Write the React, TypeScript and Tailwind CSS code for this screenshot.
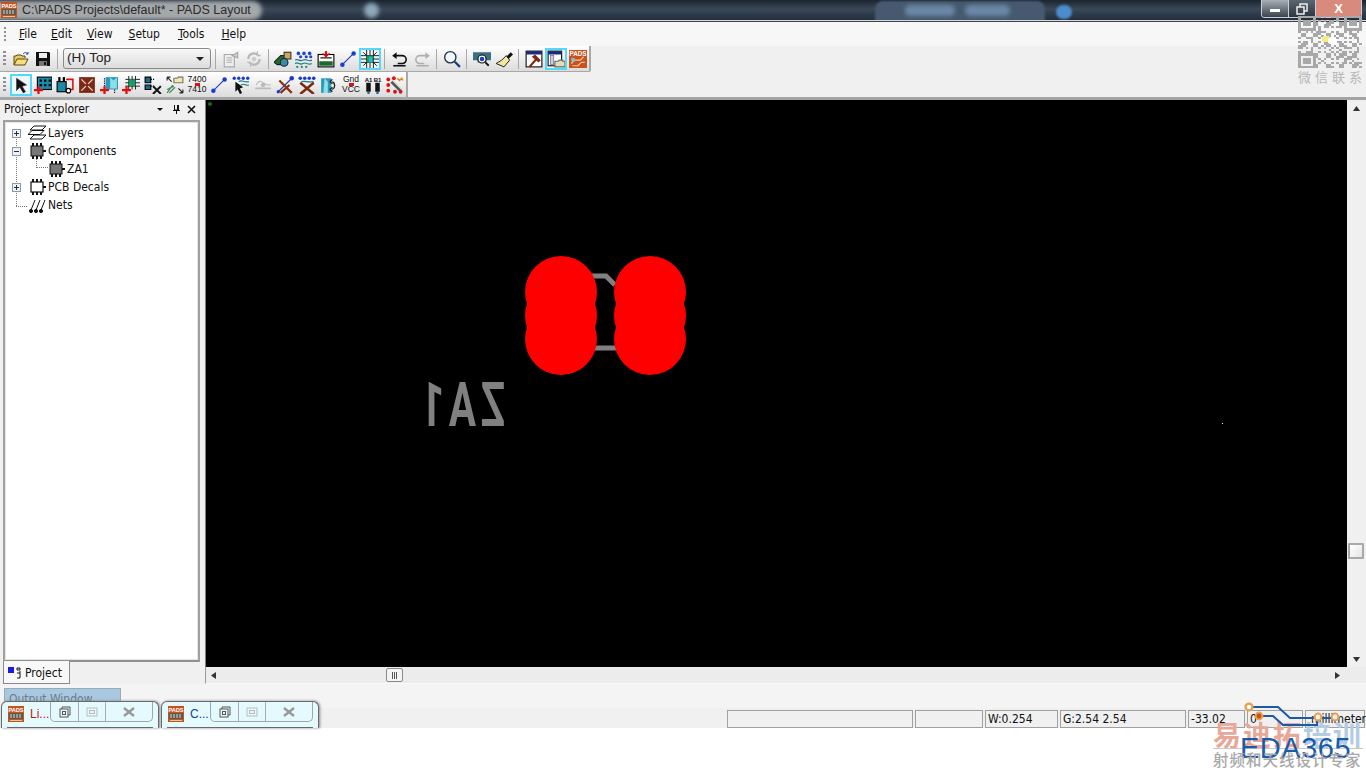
const FONT = "font-['Liberation_Sans',Arial,sans-serif]";
const UI = "font-['DejaVu_Sans_Condensed','Liberation_Sans',sans-serif]";

// small 16x16 toolbar drawings
const icons: Record<string, React.ReactNode> = {
  open: (
    <>
      <path d="M1 14V5h2l1-1h4l1 1h3v2" fill="#e8c860" stroke="#5a4a10" />
      <path d="M1 14l3-6h11l-3 6z" fill="#f6dc80" stroke="#5a4a10" />
      <path d="M10 3c2-2 3-2 5 0M15 3v-2M15 3h-2" fill="none" stroke="#1a4aa0" />
    </>
  ),
  save: (
    <>
      <path d="M1 1h13l1 1v13H1z" fill="#111" />
      <rect x="4" y="2" width="8" height="5" fill="#eee" />
      <rect x="4" y="10" width="8" height="5" fill="#777" />
      <rect x="9" y="11" width="2" height="3" fill="#111" />
    </>
  ),
  docOff: (
    <>
      <path d="M2 4h9v11H2z" fill="#eee" stroke="#aaa" />
      <path d="M4 7h5M4 9h5M4 11h5" stroke="#bbb" />
      <path d="M9 5l5-3v5z" fill="#ccc" stroke="#aaa" />
    </>
  ),
  cycleOff: (
    <>
      <path d="M3 8a5 5 0 0 1 9-3M13 8a5 5 0 0 1-9 3" fill="none" stroke="#b8b8b8" strokeWidth="2" />
      <circle cx="8" cy="8" r="2" fill="#ccc" />
      <path d="M11 1v4h3M5 15v-4H2" fill="none" stroke="#bbb" />
    </>
  ),
  board: (
    <>
      <path d="M0 11l6-6h4v8H3z" fill="#2c6a1c" stroke="#123" />
      <rect x="9" y="2" width="6" height="6" fill="#c8a860" stroke="#432" />
      <circle cx="9" cy="11" r="3.4" fill="#3a8aa0" stroke="#124" />
    </>
  ),
  nets: (
    <>
      <path d="M0 9c3-2 4 2 7 0s4 2 8 0M0 12c3-2 4 2 7 0s4 2 8 0" fill="none" stroke="#1a7a8a" />
      <g fill="#2244cc">
        <circle cx="3" cy="3" r="1.6" /><circle cx="8" cy="3" r="1.6" /><circle cx="13" cy="3" r="1.6" />
        <circle cx="5" cy="6" r="1.4" /><circle cx="10" cy="6" r="1.4" /><circle cx="14" cy="6" r="1.4" />
      </g>
      <g fill="#1a8a7a"><circle cx="2" cy="15" r="1" /><circle cx="6" cy="15" r="1" /><circle cx="10" cy="15" r="1" /></g>
    </>
  ),
  pcbArrow: (
    <>
      <rect x="1" y="4" width="14" height="11" fill="#fff" stroke="#000" />
      <rect x="2" y="10" width="12" height="4" fill="#1d6a2c" />
      <path d="M3 7h10" stroke="#000" />
      <path d="M8 1v5" stroke="#d01010" strokeWidth="2" />
      <path d="M5 3l3 3 3-3" fill="none" stroke="#d01010" />
    </>
  ),
  line: (
    <>
      <path d="M3 13L13 3" stroke="#1a3ab0" />
      <circle cx="3" cy="13" r="2" fill="#1a3ad0" />
      <circle cx="13" cy="3" r="2" fill="#1a3ad0" />
    </>
  ),
  rays: (
    <>
      <path d="M8 0v16M5 0v16M11 0v16M0 8h16M0 5h16M0 11h16M2 2l12 12M14 2L2 14" stroke="#111" strokeWidth="0.8" />
      <rect x="5" y="5" width="6" height="6" fill="#1a9a4a" />
      <rect x="7" y="6" width="3" height="5" fill="#20b8e8" />
    </>
  ),
  undo: (
    <>
      <path d="M3 5h7a3.5 3.5 0 0 1 0 7H6" fill="none" stroke="#111" strokeWidth="1.4" />
      <path d="M5 2L1 5l4 3z" fill="#111" />
      <path d="M2 14h11" stroke="#111" strokeWidth="1.4" />
    </>
  ),
  redo: (
    <>
      <path d="M13 5H6a3.5 3.5 0 0 0 0 7h4" fill="none" stroke="#b0b0b0" strokeWidth="1.4" />
      <path d="M11 2l4 3-4 3z" fill="#b0b0b0" />
      <path d="M3 14h11" stroke="#b0b0b0" strokeWidth="1.4" />
    </>
  ),
  zoom: (
    <>
      <circle cx="6.5" cy="6.5" r="5" fill="#f2f8ff" stroke="#234" strokeWidth="1.2" />
      <path d="M10.5 10.5l4.5 4.5" stroke="#1a3a80" strokeWidth="2" />
    </>
  ),
  view: (
    <>
      <path d="M0 2h16v7h-4v2H4V9H0z" fill="#3a7080" />
      <circle cx="8" cy="8" r="3.6" fill="#fff" stroke="#111" />
      <circle cx="8" cy="8" r="2" fill="#1a3ad0" />
      <path d="M11 11l3 3" stroke="#111" strokeWidth="1.6" />
    </>
  ),
  brush: (
    <>
      <path d="M10 6l4-4 2 2-4 4z" fill="#111" />
      <path d="M10 5l3 4-5 6-7-3 5-3z" fill="#f0e8a0" stroke="#111" strokeWidth="0.8" />
    </>
  ),
  hammer: (
    <>
      <rect x="1" y="1" width="14" height="14" fill="#fff" stroke="#111" />
      <rect x="1" y="1" width="14" height="3" fill="#1a2a80" />
      <path d="M4 15l7-8" stroke="#7a2a10" strokeWidth="2" />
      <path d="M6 6l3-2 5 5-2 2z" fill="#7a2a10" />
    </>
  ),
  winFolder: (
    <>
      <rect x="1" y="1" width="12" height="13" fill="#fff" stroke="#111" />
      <rect x="1" y="1" width="12" height="3" fill="#1a2a80" />
      <rect x="3" y="5" width="3" height="8" fill="#ccd" stroke="#668" strokeWidth="0.6" />
      <path d="M7 15V10h3l1-1h3v1h2v5z" fill="#e0ddb8" stroke="#666" />
    </>
  ),
  logo: (
    <>
      <rect width="16" height="16" fill="#c8521c" />
      <text x="8" y="5.5" textAnchor="middle" fontSize="5.6" fontWeight="700" fill="#fff" fontFamily="Liberation Sans">PADS</text>
      <path d="M2 12l3-3h5l3-3M3 14h5l3-3h3" fill="none" stroke="#f2c8a0" />
      <rect x="2" y="7" width="3" height="3" fill="#7ac0e0" />
    </>
  ),
  appLogo: (
    <>
      <rect width="16" height="16" fill="#c8521c" />
      <text x="8" y="5.5" textAnchor="middle" fontSize="5.6" fontWeight="700" fill="#fff" fontFamily="Liberation Sans">PADS</text>
      <rect x="1" y="7" width="14" height="6" fill="#5a5a50" />
      <path d="M3 8v4M6 8v4M9 8v4M12 8v4" stroke="#ddd" />
      <rect x="2" y="14" width="12" height="1" fill="#f2c8a0" />
    </>
  ),
  cursor: <path d="M4 2l9 6-4 1 3 5-2 1-3-5-3 3z" fill="#111" stroke="#334" strokeWidth="0.5" />,
  gridAdd: (
    <>
      <rect x="3" y="1" width="13" height="11" fill="#1a8aa8" stroke="#000" />
      <path d="M5 3h2v2H5zM9 3h2v2H9zM13 3h2v2h-2zM5 7h2v2H5zM9 7h2v2H9zM13 7h2v2h-2z" fill="#000" />
      <path d="M4 9v7M0 12.5h8" stroke="#e01010" strokeWidth="2" />
    </>
  ),
  connect: (
    <>
      <rect x="1" y="5" width="8" height="9" fill="#1a8aa8" stroke="#000" />
      <rect x="2" y="1" width="2" height="4" fill="#000" /><rect x="6" y="1" width="2" height="4" fill="#000" />
      <path d="M9 3h6v9h-3" fill="none" stroke="#e01010" strokeWidth="1.4" />
      <circle cx="11" cy="13" r="2" fill="#fff" stroke="#000" />
    </>
  ),
  brownBox: (
    <>
      <rect x="1" y="1" width="14" height="14" fill="#7a2a14" />
      <path d="M3 3l4 4M13 3L9 7M3 13l4-4M13 13L9 9" stroke="#f0d0c0" strokeWidth="1.2" />
    </>
  ),
  dropAdd: (
    <>
      <path d="M5 1h11v11H5z" fill="#2a9ab8" />
      <path d="M9 1l3 3 3-3v10H9z" fill="#8adfe8" />
      <path d="M4 2v7M13 12v3" stroke="#113" strokeDasharray="1 1" />
      <path d="M4 9v7M0 12.5h8" stroke="#e01010" strokeWidth="2" />
    </>
  ),
  raysAdd: (
    <>
      <path d="M9 0v12M6 0v12M12 0v12M3 6h13M3 3h13M3 9h13" stroke="#111" strokeWidth="0.8" />
      <rect x="6" y="3" width="6" height="6" fill="#1a9a6a" />
      <path d="M4 9v7M0 12.5h8" stroke="#e01010" strokeWidth="2" />
    </>
  ),
  nodeX: (
    <>
      <path d="M1 1h5v5H1zM1 8h5v4H1z" fill="#1a6a90" stroke="#000" />
      <path d="M6 3h4M6 9h3" stroke="#000" strokeDasharray="1 1" />
      <path d="M8 9l7 7M15 9l-7 7" stroke="#111" strokeWidth="1.8" />
    </>
  ),
  folderArrows: (
    <>
      <path d="M7 6V2h3l1-1h4v5z" fill="#efe6b0" stroke="#776" />
      <path d="M1 1l4 4M1 1h3M1 1v3M15 15l-4-4M15 15h-3M15 15v-3" stroke="#222" fill="none" />
      <path d="M1 15l5-7M1 12l6-3M3 15l5-5" stroke="#3a8a5a" />
    </>
  ),
  cross: (
    <>
      <path d="M2 14L14 2" stroke="#1a3ab0" />
      <circle cx="14" cy="2" r="2" fill="#1a3ad0" />
      <circle cx="2" cy="14" r="1.5" fill="#1a3ad0" />
      <path d="M3 4l11 11M12 8l-8 7" stroke="#8a3010" strokeWidth="2" />
    </>
  ),
  netCursor: (
    <>
      <path d="M6 5c3-2 4 1 9 0M8 8c3-2 4 1 7 0" fill="none" stroke="#1a7a8a" />
      <g fill="#1a3ad0"><circle cx="2" cy="2" r="1.5" /><circle cx="6" cy="2" r="1.5" /><circle cx="10" cy="2" r="1.5" /><circle cx="14" cy="2" r="1.5" /></g>
      <path d="M3 5l7 5-3 1 2 4-2 1-2-4-2 2z" fill="#111" />
    </>
  ),
  routeOff: (
    <>
      <path d="M1 11h14" stroke="#bbb" strokeWidth="1.5" />
      <path d="M2 8c2-4 4-4 6-2l4 2h3" fill="none" stroke="#bbb" />
      <circle cx="8" cy="8" r="2" fill="#bbb" />
    </>
  ),
  netX: (
    <>
      <g fill="#1a3ad0"><circle cx="2" cy="2" r="1.6" /><circle cx="6" cy="2" r="1.6" /><circle cx="10" cy="2" r="1.6" /><circle cx="14" cy="2" r="1.6" /></g>
      <path d="M3 5c4-1 6 1 11 0" stroke="#1a7a8a" fill="none" />
      <path d="M2 6l12 10M14 6L2 16" stroke="#7a2a10" strokeWidth="2.2" />
    </>
  ),
  swap: (
    <>
      <path d="M1 2h9v13H1z" fill="#2a9ab8" />
      <path d="M4 2l3 3v10H3z" fill="#8adfe8" />
      <path d="M11 5a4 4 0 0 1 0 7M11 3l-2 2 2 2M11 10l-2 2 2 2" fill="none" stroke="#222" strokeWidth="1.2" />
    </>
  ),
  pins: (
    <>
      <text x="4" y="5" textAnchor="middle" fontSize="5.4" fontWeight="700" fill="#111" fontFamily="Liberation Sans">A1</text>
      <text x="12" y="5" textAnchor="middle" fontSize="5.4" fontWeight="700" fill="#111" fontFamily="Liberation Sans">B1</text>
      <rect x="2" y="6" width="4" height="8" fill="#111" /><rect x="10" y="6" width="4" height="8" fill="#111" />
      <rect x="3" y="14" width="2" height="2" fill="#1a6a90" /><rect x="11" y="14" width="2" height="2" fill="#1a6a90" />
    </>
  ),
  redDots: (
    <>
      <g fill="#e01010"><circle cx="2" cy="3" r="1.7" /><circle cx="7" cy="2" r="1.7" /><circle cx="2" cy="8" r="1.7" /><circle cx="2" cy="13" r="1.7" /><circle cx="8" cy="14" r="1.7" /><circle cx="13" cy="14" r="1.7" /></g>
      <path d="M5 5l8 8" stroke="#555" strokeWidth="3" />
      <path d="M6 4l8 8" stroke="#ddd" />
      <path d="M10 2l2 2 2-2 1 2" fill="none" stroke="#e08a10" strokeWidth="1.4" />
    </>
  ),
};

const Glyph = ({ name, size = 16 }: { name: string; size?: number }) => (
  <svg width={size} height={size} viewBox="0 0 16 16" className="shrink-0">{icons[name]}</svg>
);

const ToolBtn = ({ name, active, size = 18 }: { name: string; active?: boolean; size?: number }) => (
  <div className={`w-[22px] h-[22px] flex items-center justify-center ${active ? "border-2 border-[#55d8f8] bg-[#eef6fa]" : ""}`}>
    <Glyph name={name} size={size} />
  </div>
);

const TextBtn = ({ top, bottom }: { top: string; bottom: string }) => (
  <div className="w-[22px] h-[22px] flex flex-col items-center justify-center leading-[9px] text-[8.5px] text-[#111] relative">
    <span>{top}</span>
    <span className="mt-px">{bottom}</span>
    <span className="absolute top-[9px] left-[9px] w-[5px] h-[3px] bg-[#e01010]" />
  </div>
);

const Grip = () => (
  <div className="w-[3px] h-[16px] mx-[3px] bg-[repeating-linear-gradient(180deg,#909090_0,#909090_2px,transparent_2px,transparent_4px)]" />
);

const Sep = () => <div className="w-px h-[20px] bg-[#a8a8a8] ml-[3px] mr-[4px]" />;

const Menu = ({ label, cls }: { label: string; cls: string }) => (
  <span className={cls}>
    <span className="underline underline-offset-1">{label[0]}</span>
    {label.slice(1)}
  </span>
);

const TreeRow = ({ icon, label, box, indent }: { icon: React.ReactNode; label: string; box?: "+" | "-"; indent?: boolean }) => (
  <div className="h-[18px] flex items-center relative">
    <div className={`shrink-0 w-[20px] flex items-center ${indent ? "ml-[42px]" : "ml-[23px]"}`}>{icon}</div>
    <span className={`${UI} text-[12px] text-[#111]`}>{label}</span>
    {box && (
      <span className="absolute left-[7px] top-[5px] w-[9px] h-[9px] bg-[#eef2f6] border border-[#8a98a8] flex items-center justify-center text-[9px] leading-none text-[#234]">
        <span className="w-[5px] h-px bg-[#234] absolute" />
        {box === "+" && <span className="h-[5px] w-px bg-[#234] absolute" />}
      </span>
    )}
  </div>
);

const Chip = ({ dark }: { dark?: boolean }) => (
  <svg width="18" height="16" viewBox="0 0 18 16">
    <rect x="3" y="3" width="12" height="10" fill={dark ? "#777" : "#fff"} stroke="#111" strokeWidth={dark ? 1 : 1.2} />
    <path d="M5 0v3M9 0v3M13 0v3M5 13v3M9 13v3M13 13v3M15 8h3" stroke="#111" strokeWidth="2" />
  </svg>
);

const MiniWindow = ({ label, color }: { label: string; color: string }) => (
  <div className="w-[158px] h-[27px] relative rounded-t-[6px] border border-b-0 border-[#6a6a6a] bg-[#e4fafc] shadow-[1px_0_3px_#888] shrink-0">
    <div className="absolute left-[6px] top-[4px]">
      <Glyph name="appLogo" />
    </div>
    <span className={`absolute left-[28px] top-[3px] text-[12px] ${color}`}>{label}</span>
    <div className="absolute left-[48px] top-0 w-[103px] h-[20px] flex border border-t-0 border-[#9aa] rounded-b-[5px] text-[#777]">
      <div className="w-[28px] flex items-center justify-center border-r border-[#aab]">
        <svg width="12" height="12" viewBox="0 0 12 12" fill="none" stroke="#555"><rect x="1" y="3" width="8" height="8" /><path d="M3 3V1h8v8H9" /><rect x="3.5" y="5.5" width="3" height="3" /></svg>
      </div>
      <div className="w-[27px] flex items-center justify-center border-r border-[#aab]">
        <svg width="12" height="10" viewBox="0 0 12 10" fill="none" stroke="#bbb"><rect x="1" y="1" width="10" height="8" /><rect x="3.5" y="3.5" width="5" height="3" /></svg>
      </div>
      <div className="flex-1 flex items-center justify-center">
        <svg width="12" height="10" viewBox="0 0 12 10" stroke="#999" strokeWidth="2.4"><path d="M1 1l10 8M11 1L1 9" /></svg>
      </div>
    </div>
    <div className="absolute left-[5px] right-[5px] bottom-0 h-px bg-[#667]" />
  </div>
);

const Field = ({ w, children }: { w: string; children?: React.ReactNode }) => (
  <div className={`${w} ${UI} h-[18px] border border-[#a0a0a0] bg-[#f0f0f0] text-[12px] leading-[16px] pl-[2px] whitespace-nowrap overflow-visible text-[#111]`}>
    {children}
  </div>
);

// watermark code, pseudo random modules
const qr: number[][] = [];
for (let y = 0; y < 25; y++) {
  for (let x = 0; x < 25; x++) {
    const finder = (x < 7 && y < 7) || (x > 17 && y < 7) || (x < 7 && y > 17);
    if (!finder && ((x * 7 + y * 13 + x * y * 3) % 5 < 2 || (x ^ y) % 7 === 0)) qr.push([x, y]);
  }
}

const QrCode = () => (
  <svg width="64" height="52" viewBox="0 0 25 25" preserveAspectRatio="none" shapeRendering="crispEdges" className="block">
    <g fill="#a8a8a8">
      {qr.map(([x, y]) => (
        <rect key={`${x}-${y}`} x={x} y={y} width="1" height="1" />
      ))}
    </g>
    <g fill="none" stroke="#a8a8a8">
      <rect x="0.5" y="0.5" width="6" height="6" /><rect x="18.5" y="0.5" width="6" height="6" /><rect x="0.5" y="18.5" width="6" height="6" />
    </g>
    <g fill="#a8a8a8">
      <rect x="2" y="2" width="3" height="3" /><rect x="20" y="2" width="3" height="3" /><rect x="2" y="20" width="3" height="3" />
    </g>
    <circle cx="11" cy="11" r="1.6" fill="#f4ec80" />
    <circle cx="13.5" cy="12" r="1.8" fill="#fff" />
  </svg>
);

const Arrow = ({ d }: { d: string }) => (
  <svg width="9" height="9" viewBox="0 0 9 9"><path d={d} fill="#333" /></svg>
);

export default function App() {
  return (
    <div className={`${FONT} relative w-[1366px] h-[768px] overflow-hidden bg-white flex flex-col`}>
      {/* title bar */}
      <div className="h-[22px] shrink-0 relative overflow-hidden bg-[#2b3744]">
        <div className="absolute inset-x-0 top-0 h-[20px] bg-[linear-gradient(180deg,#1b2530_0,#3a4858_45%,#232e3a_100%)]" />
        {/* blurred desktop behind the glass */}
        <div className="absolute left-[-6px] top-[1px] w-[268px] h-[19px] rounded-r-[10px] bg-[#a4a8aa] blur-[2px]" />
        <div className="absolute left-[364px] top-[3px] w-[15px] h-[15px] rounded-full bg-[#8fa8bc] blur-[2px]" />
        <div className="absolute left-[875px] top-[1px] w-[170px] h-[20px] rounded-t-[8px] bg-[#46596e] blur-[1px]" />
        <div className="absolute left-[905px] top-[5px] w-[50px] h-[11px] rounded-[5px] bg-[#6a87a6] blur-[2px]" />
        <div className="absolute left-[965px] top-[5px] w-[45px] h-[11px] rounded-[5px] bg-[#6a87a6] blur-[2px]" />
        <div className="absolute left-[1056px] top-[5px] w-[16px] h-[14px] rounded-full bg-[#4a8ccc] blur-[1px]" />
        <div className="relative flex items-center h-[20px]">
          <div className="ml-[1px] mr-[5px]"><Glyph name="appLogo" /></div>
          <span className="text-[12.5px] text-[#2a2a2a]">C:\PADS Projects\default* - PADS Layout</span>
        </div>
        <div className="absolute left-0 right-0 top-[20px] h-px bg-[#d8dce0]" />
        <div className="absolute left-0 right-0 top-[21px] h-px bg-[#3c4248]" />
        <div className="absolute left-[1261px] top-0 h-[18px] w-[101px] flex border border-t-0 border-[#ccd] rounded-b-[4px] overflow-hidden">
          <div className="w-[27px] bg-[linear-gradient(180deg,#a8b0b6,#39434e)] flex items-center justify-center border-r border-[#ccd]">
            <span className="w-[10px] h-[3px] bg-white mt-[3px]" />
          </div>
          <div className="w-[27px] bg-[linear-gradient(180deg,#5a6670,#2b3540)] flex items-center justify-center border-r border-[#ccd]">
            <svg width="12" height="12" viewBox="0 0 12 12" fill="none" stroke="#eee" strokeWidth="1.5"><rect x="1" y="4" width="7" height="7" /><path d="M4 4V1h7v7H8" /></svg>
          </div>
          <div className="flex-1 bg-[#d88a7c] flex items-center justify-center text-white font-bold text-[13px]">X</div>
        </div>
      </div>

      {/* menu */}
      <div className={`${UI} h-[24px] shrink-0 bg-[#f7f7f7] flex items-center text-[12px] text-[#111]`}>
        <div className="w-[2px] h-[14px] ml-[4px] bg-[repeating-linear-gradient(180deg,#909090_0,#909090_2px,transparent_2px,transparent_4px)]" />
        <Menu label="File" cls="ml-[13px]" />
        <Menu label="Edit" cls="ml-[14px]" />
        <Menu label="View" cls="ml-[15px]" />
        <Menu label="Setup" cls="ml-[16px]" />
        <Menu label="Tools" cls="ml-[18px]" />
        <Menu label="Help" cls="ml-[17px]" />
      </div>

      {/* toolbars */}
      <div className="h-[26px] shrink-0 bg-[#f0f0f0] flex items-start">
        <div className="w-[591px] h-[26px] flex items-center bg-[linear-gradient(180deg,#ffffff,#dcdcdc)] border-r-2 border-b border-[#a8a8a8] rounded-br-[2px]">
          <Grip />
          <div className="ml-[1px]" />
          <ToolBtn name="open" size={16} />
          <ToolBtn name="save" size={16} />
          <Sep />
          <div className="w-[148px] h-[21px] ml-[1px] mr-[1px] rounded-[3px] border border-[#8a8a8a] bg-[linear-gradient(180deg,#f8f8f8,#dcdcdc)] flex items-center justify-between pl-[3px] pr-[6px] text-[13.5px] text-[#222]">
            <span>(H) Top</span>
            <span className="w-0 h-0 border-x-[4px] border-x-transparent border-t-[4px] border-t-[#222]" />
          </div>
          <Sep />
          <ToolBtn name="docOff" />
          <div className="w-px" />
          <ToolBtn name="cycleOff" />
          <Sep />
          <div className="-ml-px" />
          <ToolBtn name="board" />
          <ToolBtn name="nets" />
          <ToolBtn name="pcbArrow" />
          <ToolBtn name="line" />
          <ToolBtn name="rays" active />
          <Sep />
          <ToolBtn name="undo" />
          <ToolBtn name="redo" />
          <Sep />
          <ToolBtn name="zoom" />
          <Sep />
          <ToolBtn name="view" />
          <ToolBtn name="brush" />
          <Sep />
          <ToolBtn name="hammer" />
          <ToolBtn name="winFolder" active />
          <ToolBtn name="logo" />
        </div>
      </div>
      <div className="h-[25px] shrink-0 bg-[#f0f0f0] flex items-start">
        <div className="w-[408px] h-[25px] flex items-center bg-[linear-gradient(180deg,#ffffff,#dcdcdc)] border-r-2 border-[#a8a8a8]">
          <Grip />
          <div className="ml-[1px]" />
          <ToolBtn name="cursor" active />
          <ToolBtn name="gridAdd" />
          <ToolBtn name="connect" />
          <ToolBtn name="brownBox" />
          <ToolBtn name="dropAdd" />
          <ToolBtn name="raysAdd" />
          <ToolBtn name="nodeX" />
          <ToolBtn name="folderArrows" />
          <TextBtn top="7400" bottom="7410" />
          <ToolBtn name="line" />
          <ToolBtn name="netCursor" />
          <ToolBtn name="routeOff" />
          <ToolBtn name="cross" />
          <ToolBtn name="netX" />
          <ToolBtn name="swap" />
          <TextBtn top="Gnd" bottom="VCC" />
          <ToolBtn name="pins" />
          <ToolBtn name="redDots" />
        </div>
      </div>

      {/* work area */}
      <div className="h-[587px] shrink-0 flex border-t-[3px] border-[#a4a4a4] bg-[#f0f0f0]">
        <div className="w-[205px] shrink-0 flex flex-col">
          <div className={`${UI} h-[18px] shrink-0 flex items-center pl-[4px] pr-[9px] text-[12px] text-[#111]`}>
            <span className="flex-1">Project Explorer</span>
            <span className="w-0 h-0 border-x-[3px] border-x-transparent border-t-[3px] border-t-[#111] mr-[9px]" />
            <svg width="9" height="10" viewBox="0 0 9 10" className="mr-[6px]" fill="none" stroke="#111"><path d="M2.5 1v5h4V1M1 6.5h7M4.5 7v3M5.5 1v5" /></svg>
            <svg width="9" height="9" viewBox="0 0 9 9" stroke="#111" strokeWidth="1.6"><path d="M1 1l7 7M8 1L1 8" /></svg>
          </div>
          <div className="ml-[3px] w-[197px] h-[542px] mt-[2px] shrink-0 border-2 border-[#a0a0a0] border-b-[#909090] outline-1 -outline-offset-3 outline-[#e4e4e4] bg-white pt-[2px] relative">
            {/* tree connectors */}
            <div className="absolute left-[11px] top-[12px] h-[72px] w-px border-l border-dotted border-[#777]" />
            <div className="absolute left-[31px] top-[30px] h-[16px] w-[12px] border-l border-b border-dotted border-[#777]" />
            <div className="absolute left-[11px] top-[84px] w-[11px] border-t border-dotted border-[#777]" />
            <TreeRow
              box="+"
              label="Layers"
              icon={<svg width="20" height="16" viewBox="0 0 20 16" fill="#fff" stroke="#111"><path d="M6 1h12l-4 4H2zM4 5.5h12l-4 4H0zM6 10h12l-4 4H2z" /></svg>}
            />
            <TreeRow box="-" label="Components" icon={<Chip dark />} />
            <TreeRow indent label="ZA1" icon={<Chip dark />} />
            <TreeRow box="+" label="PCB Decals" icon={<Chip />} />
            <TreeRow
              label="Nets"
              icon={<svg width="20" height="16" viewBox="0 0 20 16" stroke="#111" fill="none"><path d="M3 13L7 3M8 13l4-10M13 13l4-10" /><circle cx="3" cy="14" r="1.6" fill="#111" /><circle cx="8" cy="14" r="1.6" fill="#111" /><circle cx="13" cy="14" r="1.6" fill="#111" /></svg>}
            />
          </div>
          <div className={`${UI} ml-[3px] -mt-px w-[67px] h-[23px] relative bg-[#f8f8f8] border border-t-0 border-[#8a8a8a] flex items-center pl-[3px] pt-[2px] text-[12px] text-[#111]`}>
            <svg width="17" height="16" viewBox="0 0 17 16" className="mr-[1px] shrink-0">
              <rect x="1" y="2" width="6" height="6" fill="#1a1ae0" />
              <path d="M10 3h3v2h-3zM13 6v7M10 13h3M10 8h3" stroke="#111" fill="none" />
            </svg>
            Project
          </div>
        </div>

        <div className="w-[1161px] shrink-0 flex flex-col">
          <div className="flex h-[567px] shrink-0">
            {/* canvas */}
            <div className="w-[1142px] h-[567px] bg-black relative overflow-hidden border-l border-[#808080]">
              <svg width="1141" height="567" className="absolute left-0 top-0">
                <g transform="translate(-206,-100)">
                  <circle cx="210" cy="104" r="2" fill="#1a6a1a" />
                  <rect x="1222" y="423" width="1" height="1" fill="#fff" />
                  <path d="M590 276h16l9 9M590 348h30" fill="none" stroke="#808080" strokeWidth="5" />
                  <g fill="#ff0000">
                    <circle cx="561" cy="292" r="36" /><circle cx="561" cy="315.5" r="36" /><circle cx="561" cy="339" r="36" />
                    <circle cx="650" cy="292" r="36" /><circle cx="650" cy="315.5" r="36" /><circle cx="650" cy="339" r="36" />
                  </g>
                </g>
              </svg>
              {/* mirrored ref des, bottom-side silk */}
              <span className="absolute left-[215px] top-[270px] w-[80px] h-[70px] flex justify-center text-[62px] leading-[70px] font-bold tracking-[7px] text-[#808080] whitespace-nowrap font-['Roboto',sans-serif] [transform:scale(-0.65,1)]">
                ZA1
              </span>
            </div>
            {/* vertical scrollbar */}
            <div className="w-[19px] bg-[#f0f0f0] flex flex-col items-center relative">
              <div className="mt-[4px]"><Arrow d="M4.5 2L8 7H1z" /></div>
              <div className="absolute left-[1px] top-[443px] w-[16px] h-[16px] bg-[linear-gradient(135deg,#ffffff,#e4e4e4)] border-2 border-[#a8a8a8] rounded-[1px]" />
              <div className="mt-auto mb-[3px]"><Arrow d="M4.5 7L1 2h7z" /></div>
            </div>
          </div>
          {/* horizontal scrollbar */}
          <div className="h-[17px] shrink-0 flex items-center bg-[#ececec] border-l border-[#9a9a9a] border-b border-b-[#f8f8f8] relative">
            <div className="ml-[3px]"><Arrow d="M2 4.5L7 1v7z" /></div>
            <div className="absolute left-[180px] top-[1px] w-[17px] h-[14px] bg-[#f4f4f4] border border-[#8a8a8a] rounded-[2px] flex items-center justify-center gap-px">
              <span className="w-px h-[7px] bg-[#555]" /><span className="w-px h-[7px] bg-[#555]" /><span className="w-px h-[7px] bg-[#555]" />
            </div>
            <div className="ml-auto mr-[24px]"><Arrow d="M7 4.5L2 1v7z" /></div>
          </div>
        </div>
      </div>

      {/* output tab strip */}
      <div className="h-[24px] shrink-0 bg-[#f4f4f4] pt-[4px] pl-[4px] overflow-hidden">
        <div className={`${UI} w-[117px] h-[20px] bg-[#a8c8e0] border border-[#9ab] text-[12px] leading-[20px] pl-[4px] text-[#6a7a88]`}>Output Window</div>
      </div>

      {/* status bar */}
      <div className="h-[20px] shrink-0 bg-[#f0f0f0] flex items-start pt-[2px] pl-[727px] gap-[2px]">
        <Field w="w-[186px]" />
        <Field w="w-[68px]" />
        <Field w="w-[73px]">W:0.254</Field>
        <Field w="w-[126px]">G:2.54 2.54</Field>
        <Field w="w-[57px]">-33.02</Field>
        <Field w="w-[56px]">0</Field>
        <Field w="w-[60px]"><span className="ml-[3px]">millimeters</span></Field>
      </div>
      <div className="flex-1 bg-white" />

      {/* minimized child windows */}
      <div className="absolute left-[1px] top-[701px] flex gap-[2px]">
        <MiniWindow label="Li..." color="text-[#c02020]" />
        <MiniWindow label="C..." color="text-[#1040a0]" />
      </div>

      {/* watermark, top right */}
      <div className="absolute left-[1298px] top-[16px] w-[64px] flex flex-col">
        <QrCode />
        <div className="mt-[1px] flex justify-between text-[13px] leading-[16px] text-[#b8b8b8] font-['Noto_Sans_CJK_SC',sans-serif]">
          <span>微</span><span>信</span><span>联</span><span>系</span>
        </div>
      </div>

      {/* watermark, bottom right */}
      <div className="absolute left-[1213px] top-[700px] w-[153px] h-[68px]">
        <div className="absolute left-0 top-[18px] text-[28px] leading-[32px] font-bold whitespace-nowrap font-['Noto_Sans_CJK_SC',sans-serif] tracking-[2px]">
          <span className="text-[#e8a898]">易迪拓</span><span className="text-[#b4cce2]">培训</span>
        </div>
        <div className="absolute left-0 top-[48px] w-[150px] h-px bg-[#c8c8c8]" />
        <div className="absolute left-[27px] top-[33px] text-[29px] leading-[30px] text-[#1a5aa8] tracking-[0.5px]">EDA365</div>
        <div className="absolute left-0 top-[50px] text-[15.5px] leading-[18px] font-medium text-[#a8a8a8] whitespace-nowrap font-['Noto_Sans_CJK_SC',sans-serif] tracking-[1px]">
          射频和天线设计专家
        </div>
        <svg width="153" height="40" className="absolute left-0 top-0" fill="none">
          <path d="M36 7h29l12 11h43M46 16h14l10 9h34l1-8" stroke="#1a5aa8" strokeWidth="2" />
          <circle cx="36" cy="7" r="3.4" fill="#fff" stroke="#e8a050" strokeWidth="2.4" />
          <circle cx="46" cy="16" r="3.4" fill="#c8521c" stroke="#e8a050" strokeWidth="2" />
          <circle cx="105" cy="17" r="3.4" fill="#f0f0f0" stroke="#e8a050" strokeWidth="2" />
          <circle cx="122" cy="17" r="3.4" fill="#f0f0f0" stroke="#e8a050" strokeWidth="2" />
        </svg>
      </div>
    </div>
  );
}
